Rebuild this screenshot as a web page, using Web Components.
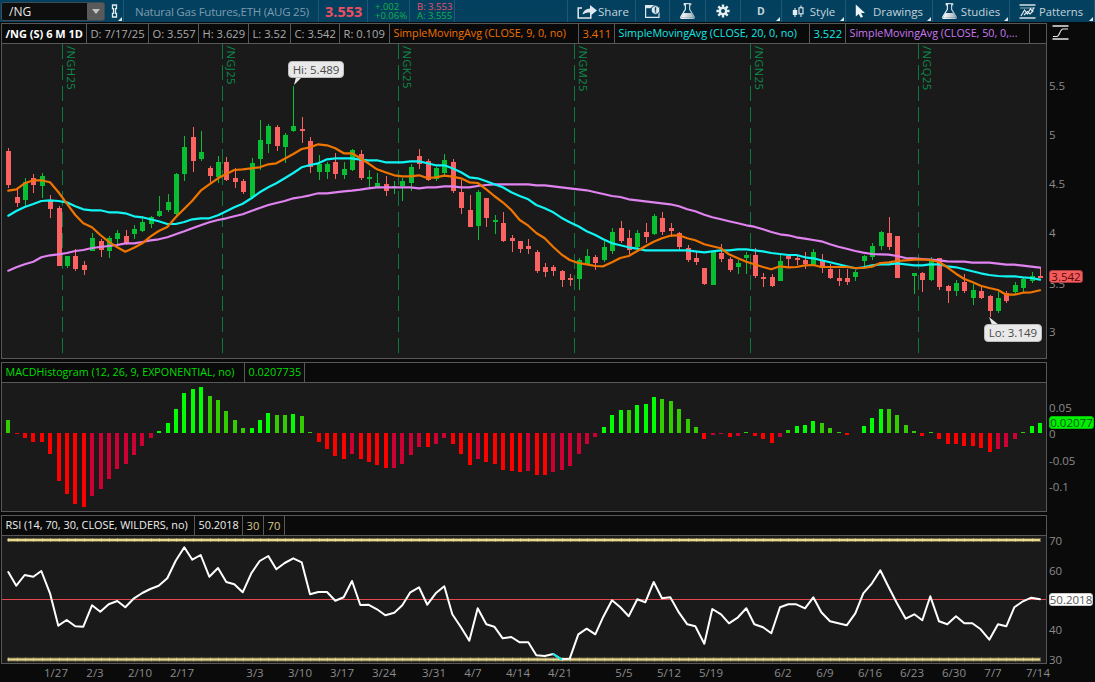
<!DOCTYPE html>
<html lang="en">
<head>
<meta charset="utf-8">
<title>/NG chart</title>
<style>
html,body{margin:0;padding:0;background:#0a0a0a;overflow:hidden}
body{font:11px "Open Sans","Liberation Sans",sans-serif;color:#aaa}
</style>
</head>
<body>
<tos-app>
  <tos-toolbar slot="toolbar">
    <tos-symbol-box>/NG</tos-symbol-box>
    <tos-tool w="19" corner icon="chain"></tos-tool>
    <tos-quote-title>Natural Gas Futures,ETH (AUG 25)</tos-quote-title>
    <tos-last>3.553</tos-last>
    <tos-two-line w="42" pad="7"><span style="color:#14b04a">+.002</span><span style="color:#14b04a">+0.06%</span></tos-two-line>
    <tos-two-line w="45" pad="7"><span style="color:#e8506a">B: 3.553</span><span style="color:#14b04a">A: 3.555</span></tos-two-line>
    <tos-spacer></tos-spacer>
    <tos-tool w="68" icon="share" gap="0" pl="3">Share</tos-tool>
    <tos-tool w="34" icon="alert"></tos-tool>
    <tos-tool w="36" icon="flask"></tos-tool>
    <tos-tool w="35" icon="gear"></tos-tool>
    <tos-tool w="41" corner bold>D</tos-tool>
    <tos-tool w="64" corner icon="candle" gap="6">Style</tos-tool>
    <tos-tool w="87" corner icon="arrow" gap="7">Drawings</tos-tool>
    <tos-tool w="77" corner icon="flask" gap="4">Studies</tos-tool>
    <tos-tool w="85" corner icon="patterns" gap="3" pr="2" fs="11.2">Patterns</tos-tool>
  </tos-toolbar>

  <tos-panel style="--h:336px;--lh:19px">
    <tos-cell slot="legend" w="85" style="color:#fff;font-weight:700;font-size:11px">/NG (S) 6 M 1D</tos-cell>
    <tos-cell slot="legend" w="62">D: 7/17/25</tos-cell>
    <tos-cell slot="legend" w="50">O: 3.557</tos-cell>
    <tos-cell slot="legend" w="50">H: 3.629</tos-cell>
    <tos-cell slot="legend" w="42">L: 3.52</tos-cell>
    <tos-cell slot="legend" w="49">C: 3.542</tos-cell>
    <tos-cell slot="legend" w="50">R: 0.109</tos-cell>
    <tos-cell slot="legend" w="189" style="color:#ee7000;font-size:10.75px">SimpleMovingAvg (CLOSE, 9, 0, no)</tos-cell>
    <tos-cell slot="legend" w="36" style="color:#ee7000">3.411</tos-cell>
    <tos-cell slot="legend" w="195" style="color:#14e6e6;font-size:10.75px">SimpleMovingAvg (CLOSE, 20, 0, no)</tos-cell>
    <tos-cell slot="legend" w="36" style="color:#14e6e6">3.522</tos-cell>
    <tos-cell slot="legend" w="184" style="color:#c878f0;font-size:10.75px">SimpleMovingAvg (CLOSE, 50, 0,...</tos-cell>
    <tos-price-plot slot="plot"></tos-price-plot>
    <tos-axis slot="axis">
      <tos-type-icon></tos-type-icon>
      <tos-tick y="63">5.5</tos-tick>
      <tos-tick y="112">5</tos-tick>
      <tos-tick y="161">4.5</tos-tick>
      <tos-tick y="210">4</tos-tick>
      <tos-tick y="261">3.5</tos-tick>
      <tos-tick y="309">3</tos-tick>
      <tos-badge y="247" w="34" bg="#f25c5c" fg="#5a0808" bd="#a83c3c">3.542</tos-badge>
    </tos-axis>
  </tos-panel>

  <tos-panel style="--h:150px;--lh:19px">
    <tos-cell slot="legend" w="243" style="color:#00dd00;font-size:10.75px">MACDHistogram (12, 26, 9, EXPONENTIAL, no)</tos-cell>
    <tos-cell slot="legend" w="60" style="color:#00dd00;font-size:10.9px">0.0207735</tos-cell>
    <tos-macd-plot slot="plot"></tos-macd-plot>
    <tos-axis slot="axis">
      <tos-tick y="46">0.05</tos-tick>
      <tos-tick y="72">0</tos-tick>
      <tos-tick y="99">-0.05</tos-tick>
      <tos-tick y="125">-0.1</tos-tick>
      <tos-badge y="54" w="45" bg="#00f000" fg="#06541a" bd="#00c000">0.02077</tos-badge>
    </tos-axis>
  </tos-panel>

  <tos-panel style="--h:149px;--lh:19px">
    <tos-cell slot="legend" w="193" style="color:#eee;font-size:10.9px">RSI (14, 70, 30, CLOSE, WILDERS, no)</tos-cell>
    <tos-cell slot="legend" w="48" style="color:#eee;font-size:10.9px">50.2018</tos-cell>
    <tos-cell slot="legend" w="21" style="color:#d8c88c">30</tos-cell>
    <tos-cell slot="legend" w="21" style="color:#d8c88c">70</tos-cell>
    <tos-rsi-plot slot="plot"></tos-rsi-plot>
    <tos-axis slot="axis">
      <tos-tick y="26">70</tos-tick>
      <tos-tick y="56">60</tos-tick>
      <tos-tick y="115">40</tos-tick>
      <tos-tick y="145">30</tos-tick>
      <tos-badge y="78" w="44" bg="#ffffff" fg="#555" bd="#ccc">50.2018</tos-badge>
    </tos-axis>
  </tos-panel>

  <tos-date-axis slot="dates">
    <tos-date x="56">1/27</tos-date><tos-date x="95">2/3</tos-date><tos-date x="140">2/10</tos-date>
    <tos-date x="182">2/17</tos-date><tos-date x="255">3/3</tos-date><tos-date x="300">3/10</tos-date>
    <tos-date x="342">3/17</tos-date><tos-date x="384">3/24</tos-date><tos-date x="434">3/31</tos-date>
    <tos-date x="473">4/7</tos-date><tos-date x="518">4/14</tos-date><tos-date x="560">4/21</tos-date>
    <tos-date x="624">5/5</tos-date><tos-date x="669">5/12</tos-date><tos-date x="711">5/19</tos-date>
    <tos-date x="783">6/2</tos-date><tos-date x="825">6/9</tos-date><tos-date x="870">6/16</tos-date>
    <tos-date x="912">6/23</tos-date><tos-date x="954">6/30</tos-date><tos-date x="993">7/7</tos-date>
    <tos-date x="1038">7/14</tos-date>
  </tos-date-axis>
</tos-app>

<script>
/* ---------- data ---------- */
const cx = i => 8.3 + 8.387 * i;
const zy = z => 130 + z / 3;
const CANDLES = [
['r',63,165,55,173],['r',201,219,175,230],['g',156,210,145,230],['r',145,165,132,190],['g',138,168,130,205],
['r',210,237,195,263],['r',234,408,228,408],['g',378,408,378,414],['r',378,417,358,423],['r',405,420,393,435],
['g',324,363,309,363],['r',333,360,327,381],['g',324,363,318,384],['g',309,327,300,345],['r',318,342,300,345],
['g',297,312,285,327],['g',276,303,258,306],['g',261,282,258,294],['g',243,258,198,261],['g',216,240,192,246],
['g',132,252,129,264],['g',51,132,18,153],['r',21,93,-9,126],['g',66,87,3,93],['r',114,138,108,159],
['g',96,141,78,159],['r',96,150,81,153],['r',144,156,114,174],['r',153,186,147,192],['g',99,201,84,207],
['g',30,87,-30,120],['g',-12,42,-18,69],['r',-9,48,-15,63],['g',15,51,9,99],['g',-12,3,-132,6],
['r',-3,3,-39,39],['r',33,110,21,129],['g',102,126,75,150],['g',102,126,96,147],['r',96,132,69,147],
['g',117,135,96,147],['g',60,120,57,123],['r',72,144,60,150],
['g',141,147,120,174],['g',159,171,129,171],['r',162,183,138,198],['g',168,171,153,192],['g',153,168,144,213],
['g',111,159,102,183],['r',78,102,57,117],['r',93,150,87,153],['g',114,147,111,153],['g',90,129,72,141],
['r',96,183,87,189],['r',186,234,150,252],['r',240,291,195,291],['g',186,288,180,330],['r',204,264,204,291],
['g',270,276,255,312],['r',279,333,246,336],['r',324,333,315,366],['r',333,357,333,369],['r',348,357,327,372],
['r',366,423,360,429],['r',411,426,399,441],['r',411,423,405,438],['r',423,450,420,471],['r',444,450,432,468],
['g',390,447,384,480],['g',378,402,357,402],['r',381,399,375,420],['g',351,390,333,396],['g',306,363,294,372],
['r',294,333,273,339],['r',324,360,300,372],['g',309,351,300,354],['r',306,321,279,339],['g',258,312,252,315],
['r',264,306,246,315],['r',294,303,279,321],['r',309,351,306,360],['r',354,390,345,396],['r',384,396,363,405],
['r',414,462,414,465],['g',363,465,360,465],['r',369,387,342,396],['r',387,420,381,426],
['g',399,411,390,432],['g',375,384,366,432],['r',375,438,354,444],['r',441,447,429,471],['r',441,468,432,471],
['g',393,453,375,453],['r',378,387,372,414],['r',384,390,375,405],['r',390,402,366,417],['g',366,405,357,405],
['r',393,414,372,429],['r',417,444,402,447],['r',444,453,417,468],['r',444,456,417,465],['g',426,441,420,453],
['g',378,393,375,411],['g',348,381,339,390],['g',306,348,303,360],['r',309,351,261,360],['r',318,444,318,444],
null,
['g',429,438,429,492],['r',429,450,426,486],['g',390,450,381,453],['r',384,471,384,480],['r',468,483,465,519],
['g',459,483,450,498],['r',456,483,432,489],['g',480,504,462,525],['r',483,504,465,507],['r',498,543,495,561],
['g',504,543,486,549],['r',489,513,483,519],['g',465,486,456,492],['g',447,474,444,486],['g',438,453,426,459],
['r',438,444,414,444]
];
const seg = (off, s, base) => {
  const n = s.split(/[ ;,]+/).map(Number), out = [];
  for (let i = 0; i + 1 < n.length; i += 2) out.push((off + n[i] / 3).toFixed(1) + ',' + (base + n[i + 1] / 3).toFixed(1));
  return out;
};
const SMA9 = [].concat(
 seg(0,'25,182 49,178 74,160 100,151 124,151 150,157 175,186 200,220 226,255 250,280 276,292 301,315 326,335 352,352 376,365 402,353 427,340 451,320 476,303 502,291 527,262 553,236 577,212 602,182 628,163 654,145 679,132 703,120 728,118 754,115 779,112 805,103 829,100 854,86 880,72 905,57 930,52 955,43 981,46 1006,55 1031,70 1056,70 1081,85',130),
 seg(365,'10,100 36,118 61,127 88,136 112,139 136,139 162,136 187,144 212,142 238,137 262,140 288,145 313,157 338,159 364,178 388,198 413,217 439,240 464,270 490,287 514,309 539,325 565,351 589,373 614,390 640,399 665,403 691,408 715,409 741,397 766,384 791,378 817,363 841,349 866,335 891,325 916,317 942,316 967,325 991,331 1018,343 1042,349 1068,355 1092,373',130),
 seg(730,'24,385 49,395 73,403 99,411 124,418 150,409 175,412 199,411 225,406 250,405 274,411 300,411 325,411 350,411 376,414 400,414 426,410 451,399 476,397 501,393 527,391 553,389 577,388 601,390 627,396 652,412 678,431 703,447 727,456 752,467 778,474 804,480 829,494 853,494 879,488 904,487 930,481',130));
const SMA20 = [].concat(
 seg(0,'25,257 49,243 74,231 100,222 124,213 150,211 175,213 200,217 226,229 250,238 276,241 301,241 326,247 352,247 376,250 402,259 427,262 451,268 476,274 502,282 527,282 553,276 577,268 602,265 628,265 654,256 679,244 703,232 728,221 754,205 779,187 805,172 829,160 854,145 880,129 905,112 930,105 955,100 981,88 1006,85 1031,85 1056,85 1081,89',130),
 seg(365,'10,91 36,91 61,97 88,97 112,97 136,94 162,94 187,100 212,106 238,106 262,115 288,127 313,142 338,145 364,154 388,163 413,172 439,187 464,198 490,208 514,225 539,235 565,247 589,263 614,277 640,289 665,304 691,315 715,328 741,340 766,346 791,352 817,356 841,361 866,361 891,361 916,361 942,361 967,361 991,364 1018,367 1042,364 1068,361 1092,361',130),
 seg(730,'24,358 49,358 73,361 99,364 124,369 150,372 175,375 199,375 225,382 250,385 274,391 300,397 325,403 350,409 376,415 400,412 426,406 451,403 476,403 501,400 527,403 553,406 577,406 601,403 627,403 652,409 678,412 703,418 727,424 752,430 778,435 804,438 829,439 853,439 879,442 904,444 930,449',130));
const SMA50 = [].concat(
 seg(0,'25,422 49,412 74,403 100,395 124,382 150,376 175,373 200,369 226,363 250,360 276,354 301,351 326,348 352,345 376,340 402,340 427,336 451,331 476,328 502,322 527,313 553,304 577,295 602,286 628,277 654,270 679,265 703,259 728,253 754,243 779,234 805,225 829,219 854,213 880,205 905,201 930,196 955,190 981,190 1006,187 1031,184 1056,182 1081,179',130),
 seg(365,'10,175 36,172 61,172 88,172 112,172 136,172 162,175 187,172 212,172 238,169 262,169 288,172 313,172 338,168 364,165 388,163 413,163 439,163 464,163 490,163 514,166 539,166 565,169 589,172 614,175 640,178 665,181 691,187 715,192 741,198 766,201 791,208 817,211 841,214 866,217 891,220 916,223 942,229 967,238 991,244 1018,254 1042,262 1068,268 1092,274',130),
 seg(730,'24,280 49,286 73,290 99,298 124,306 150,313 175,316 199,322 225,326 250,330 274,334 300,343 325,350 350,356 376,363 400,368 426,372 451,373 476,374 501,378 527,384 553,385 577,387 601,389 627,391 652,394 678,395 703,395 727,398 752,398 778,398 804,401 829,404 853,404 879,407 904,410 930,413',130));
const MACD = ('d39 r-3 r-15 r-27 r-27 r-63 r-144 r-183 r-213 r-222 c-189 c-168 c-138 c-108 c-93 c-66 c-39 c-15 b6 b30 b72 b120 b132 b138 d111 d99 d66 d39 d15 b15 b39 b60 d54 d54 b57 d51 d3 r-27 r-48 r-69 r-78 c-63 r-78 '+
 'r-87 r-96 r-105 c-105 c-93 c-66 c-42 r-42 c-33 c-15 r-33 r-63 r-96 c-78 r-87 r-93 r-111 r-114 r-117 c-114 r-126 r-126 c-117 c-111 c-99 c-63 c-33 c-12 b18 b54 b69 d69 b84 b87 b108 d102 d96 d72 d42 d18 r-18 c-6 c-3 r-12 '+
 'c-9 d3 r-9 r-18 r-30 c-12 d9 b21 b24 b36 d30 d15 d3 r-6 n0 b21 b45 b72 d72 d54 d24 d6 r-9 d3 r-18 r-33 r-33 r-39 r-39 r-45 r-57 c-48 c-42 c-18 d3 b21 b30').split(' ');
const MCOL = {b:'#00ff00',d:'#33cc00',r:'#ff0000',c:'#cc0033'};
const RSI = [].concat(
 seg(0,'25,186 49,227 74,195 100,200 124,183 150,250 175,347 200,330 226,349 250,350 276,286 301,305 326,283 352,273 376,292 402,265 427,249 451,237 476,227 502,205 527,152 553,112 577,149 602,135 628,200 654,174 679,216 703,223 728,247 754,190 779,153 805,138 829,178 854,159 880,145 905,157 930,253 955,246 981,246 1006,272 1031,262 1056,213 1081,285',510),
 seg(365,'10,284 36,298 61,316 88,308 112,286 136,247 162,232 187,284 212,250 238,229 262,313 288,352 313,392 338,295 364,343 388,350 413,385 439,381 464,397 490,397 514,436 539,438 565,432 589,448 614,446 640,373 665,356 691,373 715,320 741,271 766,292 791,319 817,268 841,277 866,216 891,265 916,262 942,308 967,343 991,349 1018,401 1042,297 1068,313 1092,340',510),
 seg(730,'24,322 49,295 73,343 99,352 124,370 150,292 175,283 199,283 225,295 250,262 274,307 300,334 325,340 350,346 376,310 400,250 426,220 451,181 476,232 501,280 527,326 553,313 577,331 601,259 627,334 652,343 678,319 703,340 727,340 752,358 778,389 804,343 829,349 853,292 879,274 904,263 930,268',510));

/* ---------- icons ---------- */
const ICON = {
chain:`<svg width="9" height="14" viewBox="0 0 9 14"><path d="M2.5 1h4v3.6h-1v4.8h1V13h-4V9.4h1V4.6h-1z" fill="none" stroke="#e4ecf0" stroke-width="1.3"/></svg>`,
share:`<svg width="21" height="15" viewBox="0 0 21 15"><path d="M5 4H1.2v10h12.6v-3.5" fill="none" stroke="#dfe8ee" stroke-width="1.5"/><path d="M5.5 10.6C6.2 6.5 9.4 4.6 13 4.4V1l7 5.6-7 5.4V8.5c-3 0-5.6.6-7.5 2.1z" fill="#dfe8ee"/></svg>`,
alert:`<svg width="15" height="13" viewBox="0 0 15 13"><path d="M.6.6h9.5v2H14v9.8H.6z" fill="none" stroke="#dfe8ee" stroke-width="1.2"/><rect x=".6" y=".6" width="10" height="2.6" fill="#dfe8ee"/><circle cx="10.5" cy="5" r="4.4" fill="#dfe8ee" stroke="#04405f"/><rect x="9.8" y="2.3" width="1.4" height="3.5" fill="#04405f"/><rect x="9.8" y="6.3" width="1.4" height="1.3" fill="#04405f"/></svg>`,
flask:`<svg width="15" height="16" viewBox="0 0 15 16"><defs><linearGradient id="fg" x1="0" x2="1"><stop offset="0" stop-color="#fff"/><stop offset="1" stop-color="#9fb4c0"/></linearGradient></defs><path d="M4.3.6h6.4v1.3H9.6v4.4l4.5 7.4c.4.8 0 1.7-1 1.7H1.9c-1 0-1.4-.9-1-1.7l4.5-7.4V1.9H4.3z" fill="none" stroke="url(#fg)" stroke-width="1.2"/><path d="M3.6 10h7.8l2.1 3.8c.2.5-.1.9-.7.9H2.2c-.6 0-.9-.4-.7-.9z" fill="url(#fg)"/></svg>`,
gear:`<svg width="14" height="14" viewBox="0 0 14 14"><g stroke="#e6edf1" stroke-width="2.4"><path d="M7 .4v13.2M.4 7h13.2M2.3 2.3l9.4 9.4M11.7 2.3l-9.4 9.4"/></g><circle cx="7" cy="7" r="4.3" fill="#e6edf1"/><circle cx="7" cy="7" r="2" fill="#04405f"/></svg>`,
candle:`<svg width="12" height="13" viewBox="0 0 12 13"><path d="M3 3v9M9 .5V12" stroke="#e6edf1" stroke-width="1.1"/><rect x=".8" y="5" width="4.4" height="5" fill="#e6edf1"/><rect x="7" y="2.8" width="4" height="6" fill="#04405f" stroke="#e6edf1" stroke-width="1.1"/></svg>`,
arrow:`<svg width="11" height="14" viewBox="0 0 11 14"><path d="M.8.5v12l3-2.6 2 3.8 2.2-1-2-3.7H10z" fill="#eef3f6"/></svg>`,
patterns:`<svg width="17" height="15" viewBox="0 0 17 15"><path d="M.5 1h16" stroke="#e6edf1" stroke-width="1.4"/><path d="M1 4h15" stroke="#8fa9b8"/><path d="M2 12l3.5-6 3 4 3-5.5 1.5 2.5 2-3.5M5 11l3.5-3.5 2.500 2.500 3.500-3.500" fill="none" stroke="#e6edf1" stroke-width="1.1"/><path d="M.5 14h16" stroke="#e6edf1" stroke-width="1.4"/></svg>`
};

/* ---------- helper ---------- */
function def(name, css, html, init) {
  const tpl = document.createElement('template');
  tpl.innerHTML = `<style>${css}</style>${html}`;
  customElements.define(name, class extends HTMLElement {
    constructor() { super(); this.attachShadow({mode:'open'}).appendChild(tpl.content.cloneNode(true)); }
    connectedCallback() { if (init) init(this, this.shadowRoot); }
  });
}

/* ---------- shell ---------- */
def('tos-app',
 `:host{display:flex;flex-direction:column;width:1095px;height:682px;overflow:hidden;background:#0a0a0a}
  .panels{display:flex;flex-direction:column;gap:3px;margin-top:1px}`,
 `<slot name="toolbar"></slot><div class="panels"><slot></slot></div><slot name="dates"></slot>`);

def('tos-toolbar',
 `:host{display:flex;align-items:stretch;height:22px;background:linear-gradient(#02405f,#05415f);font:11.5px "Open Sans","Liberation Sans",sans-serif}`,
 `<slot></slot>`);

def('tos-symbol-box',
 `:host{display:flex;align-items:center;box-sizing:border-box;width:104px;height:19px;margin:2px 0 0 1px;background:#0e0e0e;border:1px solid #3c4c58;border-radius:2px;color:#e6e6e6;font-size:12px;position:relative}
  span{padding-left:7px;flex:1}
  i{display:flex;align-items:center;justify-content:center;width:17px;height:100%;background:#5a5a5a;border-radius:1px}
  i::before{content:"";border:4px solid transparent;border-top:5px solid #c4c4c4;border-bottom:0}`,
 `<span><slot></slot></span><i></i>`);

def('tos-tool',
 `:host{display:flex;align-items:center;justify-content:center;box-sizing:border-box;border-right:1px solid #1f5775;color:#c4d3dd;position:relative;height:22px}
  .c{position:absolute;right:1px;bottom:1px;width:0;height:0;border:2.5px solid transparent;border-right-color:#dfe8ee;border-bottom-color:#dfe8ee}
  .i{display:flex;align-items:center}`,
 `<span class="i"></span><span class="t"><slot></slot></span><span class="c" hidden></span>`,
 (el, sr) => {
   const a = n => el.getAttribute(n);
   el.style.width = a('w') + 'px';
   if (a('icon')) sr.querySelector('.i').innerHTML = ICON[a('icon')];
   if (a('gap')) sr.querySelector('.i').style.marginRight = a('gap') + 'px';
   if (a('pl')) el.style.paddingLeft = a('pl') + 'px';
   if (a('pr')) el.style.paddingRight = a('pr') + 'px';
   if (a('fs')) el.style.fontSize = a('fs') + 'px';
   if (el.hasAttribute('corner')) sr.querySelector('.c').hidden = false;
   if (el.hasAttribute('bold')) { el.style.fontWeight = '700'; el.style.fontSize = '10.5px'; }
 });

def('tos-quote-title',
 `:host{display:flex;align-items:center;box-sizing:border-box;width:195px;padding-left:11px;color:#7d9bae;border-right:1px solid #1f5775;white-space:nowrap;letter-spacing:-.02em}`,
 `<slot></slot>`);

def('tos-last',
 `:host{display:flex;align-items:center;box-sizing:border-box;width:49px;padding-left:6px;color:#ee4f5f;border-right:1px solid #1f5775;font-weight:700;font-size:14.5px}`,
 `<slot></slot>`);

def('tos-two-line',
 `:host{display:flex;flex-direction:column;justify-content:center;box-sizing:border-box;border-right:1px solid #1f5775;font-size:9.5px;line-height:9.5px;white-space:nowrap}
  ::slotted(span){display:block}`,
 `<slot></slot>`,
 (el) => { el.style.width = el.getAttribute('w') + 'px'; el.style.paddingLeft = el.getAttribute('pad') + 'px'; });

def('tos-spacer', `:host{flex:1;border-right:1px solid #1f5775}`, ``);

/* ---------- panels ---------- */
def('tos-panel',
 `:host{display:grid;grid-template-columns:1047px 48px;height:var(--h)}
  .frame{display:flex;flex-direction:column;box-sizing:border-box;margin-left:1px;border:1px solid #585858;background:#1a1a1a;min-height:0}
  .legend{display:flex;height:var(--lh);border-bottom:1px solid #585858;background:#0a0a0a;flex:none}
  .plot{flex:1;min-height:0;position:relative}`,
 `<div class="frame"><div class="legend"><slot name="legend"></slot></div><div class="plot"><slot name="plot"></slot></div></div><slot name="axis"></slot>`);

def('tos-cell',
 `:host{display:flex;align-items:center;box-sizing:border-box;padding-left:3.5px;border-right:1px solid #585858;white-space:nowrap;font:11.2px/1 "Open Sans","Liberation Sans",sans-serif;overflow:hidden}`,
 `<slot></slot>`,
 (el) => { el.style.width = el.getAttribute('w') + 'px'; });

def('tos-axis', `:host{display:block;position:relative;background:#0a0a0a}`, `<slot></slot>`);

def('tos-tick',
 `:host{position:absolute;left:2px;color:#8a8a8a;font:11.5px/12px "Open Sans","Liberation Sans",sans-serif;white-space:nowrap}`,
 `<slot></slot>`,
 (el) => { el.style.top = (+el.getAttribute('y') - 6) + 'px'; });

def('tos-badge',
 `:host{position:absolute;left:2px;box-sizing:border-box;height:12.5px;display:flex;align-items:center;justify-content:center;border-radius:3px;font:11.5px/1 "Open Sans","Liberation Sans",sans-serif;white-space:nowrap}`,
 `<slot></slot>`,
 (el) => {
   const s = el.style, a = n => el.getAttribute(n);
   s.top = a('y') + 'px'; s.width = a('w') + 'px'; s.background = a('bg'); s.color = a('fg'); s.border = '1px solid ' + a('bd');
 });

def('tos-type-icon',
 `:host{position:absolute;left:5px;top:2px;display:block;width:17px;height:15px}`,
 `<svg width="17" height="15" viewBox="0 0 17 15"><path d="M.5 1h16M.5 14h16" stroke="#e8e8e8" stroke-width="1.6"/><path d="M1 11.5h4c2.5 0 3-7.5 6-7.5h5" fill="none" stroke="#e8e8e8" stroke-width="1.1"/></svg>`);

def('tos-date-axis', `:host{display:block;position:relative;height:18px;margin-top:0}`, `<slot></slot>`);
def('tos-date',
 `:host{position:absolute;top:3px;transform:translateX(-50%);color:#8a8a8a;font:11.5px/12px "Open Sans","Liberation Sans",sans-serif;white-space:nowrap}`,
 `<slot></slot>`,
 (el) => { el.style.left = el.getAttribute('x') + 'px'; });

/* ---------- plots ---------- */
const PLOT_CSS = `:host{display:block;position:absolute;inset:0;overflow:hidden}svg{display:block;position:absolute;left:0;top:0}`;
function line(pts, color, w) {
  return `<polyline points="${pts.join(' ')}" fill="none" stroke="${color}" stroke-width="${w}" stroke-linejoin="round" stroke-linecap="round"/>`;
}

def('tos-price-plot',
 PLOT_CSS + `
  .c{position:absolute;top:2px;writing-mode:vertical-rl;color:#0d8a48;font:11.2px/12px "Open Sans","Liberation Sans",sans-serif;letter-spacing:.4px;white-space:nowrap}
  .n{position:absolute;box-sizing:border-box;display:flex;align-items:center;justify-content:center;background:#e9e9e9;border:1px solid #bdbdbd;border-radius:4px;color:#4a4a4a;font:11.5px/1 "Open Sans","Liberation Sans",sans-serif;white-space:nowrap}`,
 `<svg width="1044" height="314" viewBox="2 44 1044 314"></svg>`,
 (el, sr) => {
   let s = '';
   const contracts = [[62,'/NGH25'],[222,'/NGJ25'],[398,'/NGK25'],[574,'/NGM25'],[750,'/NGN25'],[918,'/NGQ25']];
   contracts.forEach(c => { s += `<path d="M${c[0]+.5} 44V357" stroke="#0b7a3f" stroke-dasharray="15 6"/>`; });
   s += '<g shape-rendering="crispEdges">';
   CANDLES.forEach((c, i) => {
     if (!c) return;
     const x = Math.round(cx(i)), col = c[0] === 'g' ? '#08bf33' : '#fb6262';
     const wt = Math.round(zy(c[3])), wb = Math.round(zy(c[4])), bt = Math.round(zy(c[1])), bb = Math.round(zy(c[2]));
     s += `<rect x="${x}" y="${wt}" width="1" height="${Math.max(wb-wt,1)}" fill="${col}"/><rect x="${x-2}" y="${bt}" width="5" height="${Math.max(bb-bt,2)}" fill="${col}"/>`;
   });
   s += '</g>';
   s += line(SMA50, '#e083f0', 2.2) + line(SMA20, '#10f4f4', 2.2) + line(SMA9, '#f07400', 2.2);
   s += `<path d="M296 77l6 0-8 8z" fill="#e9e9e9"/><path d="M989 317l3 8 7 0z" fill="#e9e9e9"/>`;
   sr.querySelector('svg').innerHTML = s;
   contracts.forEach(c => {
     const d = document.createElement('div'); d.className = 'c'; d.textContent = c[1];
     d.style.left = (c[0] + 1) + 'px'; sr.appendChild(d);
   });
   [['Hi: 5.489',288,61,56,17],['Lo: 3.149',984,324,58,18]].forEach(n => {
     const d = document.createElement('div'); d.className = 'n'; d.textContent = n[0];
     d.style.cssText = `left:${n[1]-2}px;top:${n[2]-44}px;width:${n[3]}px;height:${n[4]}px`; sr.appendChild(d);
   });
 });

def('tos-macd-plot', PLOT_CSS, `<svg width="1044" height="128" viewBox="2 383 1044 128" shape-rendering="crispEdges"></svg>`,
 (el, sr) => {
   let s = '';
   MACD.forEach((m, i) => {
     const k = m[0], v = +m.slice(1) / 3; if (k === 'n') return;
     const x = Math.round(cx(i)) - 2;
     const h = Math.max(Math.abs(Math.round(v)), 1);
     s += `<rect x="${x}" y="${v >= 0 ? 433 - h : 433}" width="4" height="${h}" fill="${MCOL[k]}"/>`;
   });
   sr.querySelector('svg').innerHTML = s;
 });

def('tos-rsi-plot', PLOT_CSS, `<svg width="1044" height="127" viewBox="2 536 1044 127"></svg>`,
 (el, sr) => {
   let s = '';
   [540, 659.5].forEach(y => {
     s += `<path d="M7.5 ${y}H1040" stroke="#6e6440" stroke-width="4"/><path d="M7.5 ${y}H1040" stroke="#e8d890" stroke-width="2"/>`;
     for (let i = 0; i < 124; i++) s += `<rect x="${Math.round(cx(i))}" y="${y-2}" width="1" height="4" fill="#f4ecc4" opacity=".35"/>`;
   });
   s += `<path d="M2 599.5H1046" stroke="#e4484c" shape-rendering="crispEdges"/>`;
   s += line(RSI, '#ffffff', 2);
   s += `<path d="M553.3 654L561.3 659.3" stroke="#10e8e8" stroke-width="2" stroke-linecap="round"/>`;
   sr.querySelector('svg').innerHTML = s;
 });
</script>
</body>
</html>
